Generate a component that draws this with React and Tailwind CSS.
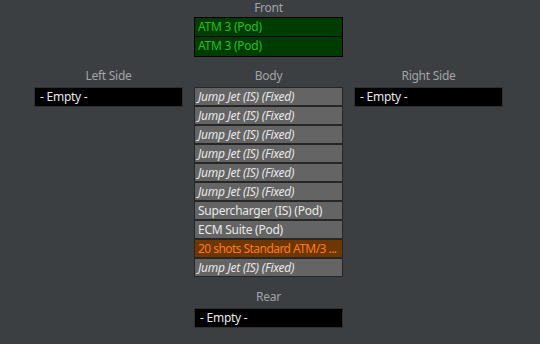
import React from 'react';

const body = [
  { label: 'Jump Jet (IS) (Fixed)', kind: 'fixed' },
  { label: 'Jump Jet (IS) (Fixed)', kind: 'fixed' },
  { label: 'Jump Jet (IS) (Fixed)', kind: 'fixed' },
  { label: 'Jump Jet (IS) (Fixed)', kind: 'fixed' },
  { label: 'Jump Jet (IS) (Fixed)', kind: 'fixed' },
  { label: 'Jump Jet (IS) (Fixed)', kind: 'fixed' },
  { label: 'Supercharger (IS) (Pod)', kind: 'pod' },
  { label: 'ECM Suite (Pod)', kind: 'pod' },
  { label: '20 shots Standard ATM/3 ...', kind: 'ammo' },
  { label: 'Jump Jet (IS) (Fixed)', kind: 'fixed' },
];

const rowStyles = {
  fixed: 'bg-[#646464] text-[#e8e8e8] italic',
  pod: 'bg-[#646464] text-[#e8e8e8]',
  ammo: 'bg-[#6e3600] text-[#ff7b1c] tracking-[-0.55px]',
};

const Label = ({ children }) => (
  <div className="h-[17px] text-center text-[12px] leading-[12px] text-[#a2a4a6]">{children}</div>
);

const Row = ({ label, kind }) => (
  <div
    className={`h-[19px] border border-[#262626] px-[3px] text-[12px] leading-[17px] whitespace-nowrap overflow-hidden ${rowStyles[kind]}`}
  >
    {label}
  </div>
);

const Empty = () => (
  <div className="h-[20px] border border-[#303030] bg-black px-[5px] text-[12px] leading-[18px] text-[#e8e8e8]">
    - Empty -
  </div>
);

export default function App() {
  return (
    <div
      className="w-[540px] h-[344px] bg-[#3c3f42] pl-[34px] tracking-[-0.25px]"
      style={{ fontFamily: '"Noto Sans", "Open Sans", sans-serif' }}
    >
      <div className="grid grid-cols-[149px_149px_149px] gap-x-[11px]">
        <div />
        <div>
          <div className="h-[17px] pt-[1px] text-center text-[12px] leading-[14px] text-[#a2a4a6]">Front</div>
          <div className="border border-black">
            <div className="h-[19px] border-b border-black bg-[#003c00] px-[3px] text-[12px] leading-[18px] text-[#22c022]">ATM 3 (Pod)</div>
            <div className="h-[19px] bg-[#003c00] px-[3px] text-[12px] leading-[18px] text-[#22c022]">ATM 3 (Pod)</div>
          </div>
        </div>
        <div />
      </div>

      <div className="mt-[13px] grid grid-cols-[149px_149px_149px] gap-x-[11px]">
        <div>
          <Label>Left Side</Label>
          <Empty />
        </div>
        <div>
          <Label>Body</Label>
          <div className="flex flex-col">
            {body.map((r, i) => (
              <Row key={i} {...r} />
            ))}
          </div>
          <div className="mt-[14px]">
            <Label>Rear</Label>
            <Empty />
          </div>
        </div>
        <div>
          <Label>Right Side</Label>
          <Empty />
        </div>
      </div>
    </div>
  );
}
